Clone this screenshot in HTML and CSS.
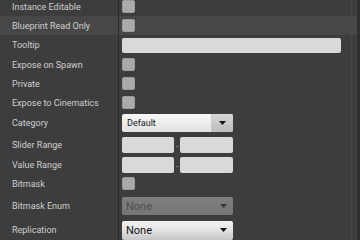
FILE: index.html
```html
<!DOCTYPE html>
<html>
<head>
<meta charset="utf-8">
<link rel="stylesheet" href="styles.css">
</head>
<body>
<div class="panel">
  <div class="list">
    <div class="row r19"><div class="label">Instance Editable</div><div class="value"><span class="check"></span></div></div>
    <div class="row r19 hl"><div class="label">Blueprint Read Only</div><div class="value"><span class="check"></span></div></div>
    <div class="row r20"><div class="label">Tooltip</div><div class="value"><span class="textbox"></span></div></div>
    <div class="row r19"><div class="label">Expose on Spawn</div><div class="value"><span class="check"></span></div></div>
    <div class="row r19"><div class="label">Private</div><div class="value"><span class="check"></span></div></div>
    <div class="row r19"><div class="label">Expose to Cinematics</div><div class="value"><span class="check"></span></div></div>
    <div class="row r22"><div class="label">Category</div><div class="value">
      <div class="combo combo-split"><span class="combo-text small">Default</span><span class="combo-btn"><svg width="7" height="4" viewBox="0 0 7 4"><path d="M0 0h7L3.5 4z" fill="#141414"/></svg></span></div>
    </div></div>
    <div class="row r22"><div class="label">Slider Range</div><div class="value range"><span class="num"></span><span class="dots"><i></i><i></i></span><span class="num"></span></div></div>
    <div class="row r18"><div class="label">Value Range</div><div class="value range"><span class="num"></span><span class="dots"><i></i><i></i></span><span class="num"></span></div></div>
    <div class="row r19"><div class="label">Bitmask</div><div class="value"><span class="check"></span></div></div>
    <div class="row r26"><div class="label">Bitmask Enum</div><div class="value">
      <div class="combo combo-disabled"><span class="combo-text">None</span><svg class="arrow" width="7" height="4" viewBox="0 0 7 4"><path d="M0 0h7L3.5 4z" fill="#383838"/></svg></div>
    </div></div>
    <div class="row r22"><div class="label">Replication</div><div class="value">
      <div class="combo combo-plain"><span class="combo-text">None</span><svg class="arrow" width="7" height="4" viewBox="0 0 7 4"><path d="M0 0h7L3.5 4z" fill="#111"/></svg></div>
    </div></div>
  </div>
  <div class="edge"></div>
</div>
</body>
</html>
```
FILE: styles.css
```css
html, body {
  margin: 0;
  padding: 0;
  background: #3d3d3d;
  overflow: hidden;
}
body {
  width: 360px;
  height: 240px;
  font-family: Roboto, "Noto Sans", sans-serif;
}
.panel {
  display: flex;
  height: 240px;
}
.list {
  width: 357px;
  margin-top: -3px;
}
.edge {
  width: 3px;
  background: #2f2f2f;
}
.row {
  display: grid;
  grid-template-columns: 119px 233px 5px;
  align-items: stretch;
}
.row::after {
  content: "";
}
.r18 { height: 18px; }
.r19 { height: 19px; }
.r20 { height: 20px; }
.r22 { height: 22px; }
.r26 { height: 26px; }
.hl { background: #474747; }
.label {
  box-sizing: border-box;
  border-right: 1px solid #2b2b2b;
  padding-left: 12px;
  display: flex;
  align-items: center;
  font-size: 9px;
  color: #cfcfcf;
  white-space: nowrap;
}
.value {
  box-sizing: border-box;
  border-right: 1px solid #474747;
  padding-left: 3px;
  display: flex;
  align-items: center;
}
.r20 .value { padding-top: 1px; }
.check {
  width: 13px;
  height: 13px;
  box-sizing: border-box;
  border-radius: 2px;
  background: #aaaaaa;
  border: 1px solid #9c9c9c;
}
.textbox {
  width: 219px;
  height: 15px;
  border-radius: 2px;
  background: #d9d9d9;
}
.range { gap: 0; }
.num {
  width: 52px;
  height: 16px;
  border-radius: 2px;
  background: #d9d9d9;
}
.num + .dots + .num { width: 53px; }
.dots {
  width: 6px;
  display: flex;
  justify-content: center;
  gap: 1px;
  padding-top: 2px;
}
.dots i {
  width: 1px;
  height: 1px;
  background: #8a8a8a;
}
.combo {
  width: 111px;
  height: 18px;
  box-sizing: border-box;
  border-radius: 2px;
  display: flex;
  align-items: center;
  overflow: hidden;
}
.combo-text {
  flex: 1;
  padding-left: 4px;
  font-size: 11px;
  color: #151515;
}
.combo-text.small {
  font-size: 9px;
  padding-left: 5px;
}
.combo-split {
  background: linear-gradient(#f7f7f7, #e2e2e2);
}
.combo-btn {
  width: 21px;
  height: 100%;
  display: flex;
  align-items: center;
  justify-content: center;
  background: linear-gradient(#d6d6d6, #bdbdbd);
  border-left: 1px solid #c8c8c8;
}
.combo-plain {
  height: 19px;
  background: linear-gradient(#f4f4f4, #e4e4e4 45%, #c6c6c6);
}
.combo-disabled {
  background: linear-gradient(#7e7e7e, #767676);
}
.combo-disabled .combo-text { color: #4f4f4f; }
.arrow {
  margin-right: 6px;
}
```
